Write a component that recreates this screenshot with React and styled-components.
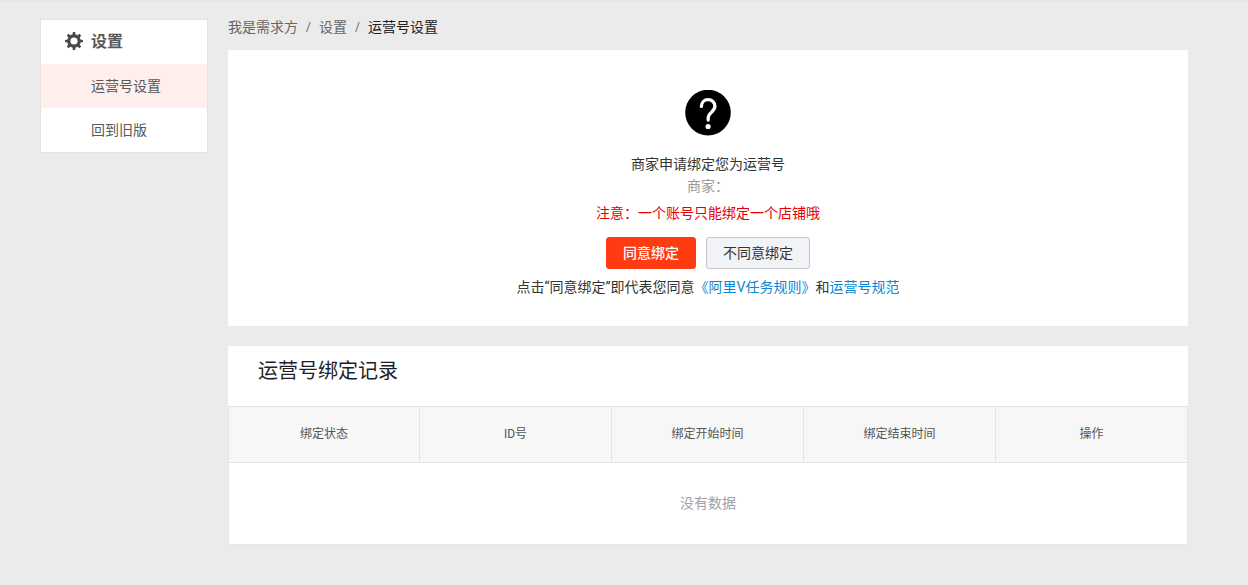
import React from 'react';
import styled, { createGlobalStyle } from 'styled-components';

const GlobalStyle = createGlobalStyle`
  * {
    box-sizing: border-box;
  }

  body {
    margin: 0;
    background-color: #ebebeb;
    color: #333;
    font-family: Roboto, "Noto Sans CJK SC", sans-serif;
    font-size: 14px;
    line-height: 22px;
  }
`;

const Page = styled.div`
  display: flex;
  align-items: flex-start;
  gap: 20px;
  min-height: 100vh;
  padding: 16px 60px 20px 40px;
  background: linear-gradient(#e4e4e4, #ebebeb 4px);
`;

const Sidebar = styled.nav`
  flex: 0 0 168px;
  margin-top: 3px;
  border: 1px solid #e4e4e4;
  background-color: #fff;
`;

const SidebarTitle = styled.h2`
  display: flex;
  align-items: center;
  gap: 8px;
  height: 44px;
  margin: 0;
  padding-left: 24px;
  color: #595959;
  font-size: 16px;
  font-weight: 700;
`;

const SidebarLink = styled.a`
  display: block;
  padding-left: 50px;
  background-color: ${({ $active }) => ($active ? '#ffeeeb' : '#fff')};
  color: #595959;
  line-height: 44px;
  text-decoration: none;
`;

const Main = styled.main`
  flex: 1;
  min-width: 0;
`;

const Breadcrumb = styled.nav`
  display: flex;
  gap: 8px;
  margin-bottom: 12px;
  color: #666;
`;

const Crumb = styled.a`
  color: #666;
  text-decoration: none;
`;

const Separator = styled.span`
  font-size: 12px;
`;

const CurrentCrumb = styled.span`
  color: #222;
`;

const Card = styled.section`
  margin-bottom: 20px;
  background-color: #fff;
`;

const BindCard = styled(Card)`
  display: flex;
  flex-direction: column;
  align-items: center;
  padding: 40px 20px 28px;
  text-align: center;
`;

const BindText = styled.p`
  margin: 0;
`;

const BindTitle = styled(BindText)`
  margin-top: 17px;
`;

const Merchant = styled(BindText)`
  color: #999;
`;

const Notice = styled(BindText)`
  margin-top: 5px;
  color: #e60000;
`;

const Actions = styled.div`
  display: flex;
  gap: 10px;
  margin: 13px 0 7px;
`;

const Button = styled.button`
  height: 32px;
  padding: 0 16px 2px;
  border: 1px solid ${({ $primary }) => ($primary ? '#ff3b12' : '#c4c6cf')};
  border-radius: 3px;
  background-color: ${({ $primary }) => ($primary ? '#ff3b12' : '#f2f3f7')};
  color: ${({ $primary }) => ($primary ? '#fff' : '#333')};
  font-family: inherit;
  font-size: 14px;
  font-weight: ${({ $primary }) => ($primary ? 500 : 400)};
  cursor: pointer;
`;

const TermsLink = styled.a`
  color: #0a88d4;
  text-decoration: none;
`;

const RecordTitle = styled.h1`
  margin: 0;
  padding: 10px 30px 20px;
  color: #1f1d28;
  font-size: 20px;
  font-weight: 400;
  line-height: 30px;
`;

const Table = styled.table`
  width: 100%;
  border-top: 1px solid #e4e4e8;
  border-spacing: 0;
  table-layout: fixed;
`;

const HeadCell = styled.th`
  height: 56px;
  padding: 0 16px 2px;
  border-right: 1px solid #e4e4e8;
  border-bottom: 1px solid #e4e4e8;
  background-color: #f7f7f7;
  color: #555;
  font-size: 12px;
  font-weight: 400;

  &:first-child {
    border-left: 1px solid #e4e4e8;
  }
`;

const EmptyCell = styled.td`
  height: 82px;
  padding: 0 0 2px;
  border: 1px solid #e6e6e6;
  border-top: none;
  color: #a0a0ab;
  text-align: center;
`;

const GearIcon = () => (
  <svg width="18" height="20" viewBox="0 0 18 20" aria-hidden="true">
    <g fill="#4a4a4a">
      {[0, 45, 90, 135, 180, 225, 270, 315].map((angle) => (
        <path key={angle} d="M7.2 4 7.9 0h2.2L10.8 4z" transform={`rotate(${angle} 9 9)`} />
      ))}
    </g>
    <circle cx="9" cy="9" r="5.2" fill="none" stroke="#4a4a4a" strokeWidth="3.2" />
  </svg>
);

const QuestionIcon = () => (
  <svg width="46" height="46" viewBox="0 0 46 46" aria-hidden="true">
    <circle cx="23" cy="22.6" r="22.8" />
    <path
      d="M16.4 16.4c0-3.9 2.9-6.8 6.7-6.8s6.8 2.8 6.8 6.6c0 2.6-1.5 4.2-3.3 5.9-2.2 2-3.4 3.4-3.4 6v2"
      fill="none"
      stroke="#fff"
      strokeWidth="3.3"
      strokeLinecap="round"
    />
    <circle cx="23.1" cy="36.5" r="2.6" fill="#fff" />
  </svg>
);

const menu = [
  { label: '运营号设置', active: true },
  { label: '回到旧版', active: false },
];

const columns = ['绑定状态', 'ID号', '绑定开始时间', '绑定结束时间', '操作'];

const App = () => {
  return (
    <>
      <GlobalStyle />
      <Page>
        <Sidebar>
          <SidebarTitle>
            <GearIcon />
            设置
          </SidebarTitle>
          {menu.map((item) => (
            <SidebarLink key={item.label} href="#" $active={item.active}>
              {item.label}
            </SidebarLink>
          ))}
        </Sidebar>
        <Main>
          <Breadcrumb>
            <Crumb href="#">我是需求方</Crumb>
            <Separator>/</Separator>
            <Crumb href="#">设置</Crumb>
            <Separator>/</Separator>
            <CurrentCrumb>运营号设置</CurrentCrumb>
          </Breadcrumb>
          <BindCard>
            <QuestionIcon />
            <BindTitle>商家申请绑定您为运营号</BindTitle>
            <Merchant>商家：</Merchant>
            <Notice>注意：一个账号只能绑定一个店铺哦</Notice>
            <Actions>
              <Button type="button" $primary>同意绑定</Button>
              <Button type="button">不同意绑定</Button>
            </Actions>
            <BindText>
              点击“同意绑定”即代表您同意
              <TermsLink href="#">《阿里V任务规则》</TermsLink>
              和<TermsLink href="#">运营号规范</TermsLink>
            </BindText>
          </BindCard>
          <Card>
            <RecordTitle>运营号绑定记录</RecordTitle>
            <Table>
              <thead>
                <tr>
                  {columns.map((column) => (
                    <HeadCell key={column} scope="col">{column}</HeadCell>
                  ))}
                </tr>
              </thead>
              <tbody>
                <tr>
                  <EmptyCell colSpan={columns.length}>没有数据</EmptyCell>
                </tr>
              </tbody>
            </Table>
          </Card>
        </Main>
      </Page>
    </>
  );
};

export default App;
